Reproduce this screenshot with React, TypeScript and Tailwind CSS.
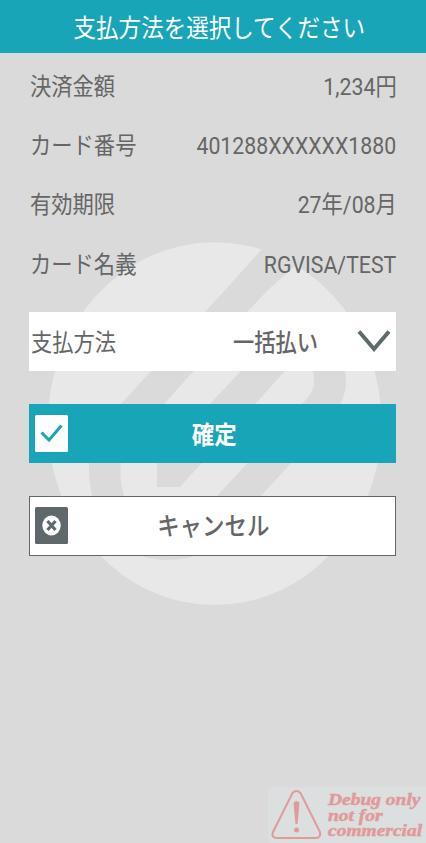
import type { ReactNode } from "react";

const rows = [
  { label: "決済金額", value: "1,234円" },
  { label: "カード番号", value: "401288XXXXXX1880" },
  { label: "有効期限", value: "27年/08月" },
  { label: "カード名義", value: "RGVISA/TEST" },
];

function Watermark() {
  return (
    <svg className="absolute inset-0 h-[843px] w-[426px]" viewBox="0 0 426 843" aria-hidden="true">
      <ellipse cx="214.7" cy="423.6" rx="167" ry="181.4" fill="#e8e8e8" />
      <path
        fill="#dadada"
        d="M262 249 L206 311 L121 404 C98 428 89 445 89 467 C89 520 118 560 168 560 C196 560 214 549 230 530 L291 463 L325 426 C342 406 349 390 345 371 C340 335 298 318 270 340 L241 371 L157 460 V487 H180 L285 371 C298 358 310 361 313 371 C316 387 313 392 302 404 L218 495 L190 522 C150 545 120 515 120.500 470 C121 452 127 445 164 404 L248 311 L268 290 L297 264 L285 240Z"
      />
    </svg>
  );
}

function T({ children, className = "" }: { children: ReactNode; className?: string }) {
  return <span className={`inline-block scale-x-[.887] whitespace-nowrap ${className}`}>{children}</span>;
}

export default function App() {
  return (
    <main className="relative flex h-[843px] w-[426px] flex-col overflow-hidden bg-[#dadada] font-['Roboto','Noto_Sans_CJK_JP',sans-serif] text-[24px] text-[#666]">
      <Watermark />
      <header className="relative flex h-[52.5px] shrink-0 items-center justify-center bg-[#18a5b7] pt-[3px] pl-3 text-[25.4px] text-white">
        <T>支払方法を選択してください</T>
      </header>
      <div className="relative flex flex-col pr-[29.6px] pl-[29.4px] pt-[4.5px]">
        <dl>
          {rows.map((r) => (
            <div key={r.label} className="flex h-[59.3px] items-center justify-between">
              <dt className="pl-[0.6px]"><T className="origin-left">{r.label}</T></dt>
              <dd><T className="origin-right">{r.value}</T></dd>
            </div>
          ))}
        </dl>
        <button className="mt-[17.8px] flex h-[59px] items-center bg-white pl-[2px]">
          <T className="origin-left pt-[3px]">支払方法</T>
          <T className="ml-[105.6px] origin-left pt-[3px] font-medium">一括払い</T>
          <svg className="ml-[28px] h-[26px] w-[34px] shrink-0" viewBox="0 0 34 26" fill="none" stroke="#5f696b" strokeWidth="4">
            <path d="M2 3.500 L17 21 L32 3.500" />
          </svg>
        </button>
        <button className="mt-[33px] flex h-[59px] items-center bg-[#18a5b7] px-[6px] text-[25.3px] font-bold text-white">
          <svg className="h-[37px] w-[33px]" viewBox="0 0 33 37">
            <rect width="33" height="37" rx="1.5" fill="#fff" />
            <path d="M6.5 17.5 L14 25 L26.5 10.5" fill="none" stroke="#18a5b7" strokeWidth="3" />
          </svg>
          <span className="flex-1 pt-[4px] pr-[31px] text-center"><T>確定</T></span>
        </button>
        <button className="mt-[33px] flex h-[60px] items-center border-[1.5px] border-[#666] bg-white px-[5px] text-[25.3px] font-medium">
          <svg className="h-[37px] w-[33px]" viewBox="0 0 33 37">
            <rect width="33" height="37" rx="1.5" fill="#5f696b" />
            <ellipse cx="16.5" cy="18.5" rx="9.2" ry="10" fill="#fff" />
            <path d="M12.5 14 L20.5 23 M20.5 14 L12.5 23" stroke="#5f696b" strokeWidth="3.2" />
          </svg>
          <span className="flex-1 pt-[2px] pr-[32px] text-center"><T>キャンセル</T></span>
        </button>
      </div>
      <aside className="absolute right-0 bottom-0 flex h-[56px] w-[158px] items-center rounded-l bg-[#dbdfdf] text-[#e19a9a]">
        <svg className="ml-[3px] h-[52px] w-[51px] shrink-0" viewBox="0 0 51 52">
          <path d="M21.5 4 Q25.500 0 29.500 4 L49 43 Q50 49 45 49 H6 Q0 49 2 43Z" fill="none" stroke="currentColor" strokeWidth="2" />
          <path d="M22.500 14 Q25.500 10 28.500 14 L26.500 35 H24.500Z" fill="currentColor" />
          <circle cx="25.500" cy="41" r="2.500" fill="currentColor" />
        </svg>
        <p className="ml-[6px] origin-left scale-x-[1.18] pt-px whitespace-pre font-['Liberation_Serif',serif] text-[16.5px] leading-[15.5px] font-bold italic [-webkit-text-stroke:0.5px_currentColor]">
          {"Debug only\nnot for\ncommercial"}
        </p>
      </aside>
    </main>
  );
}
